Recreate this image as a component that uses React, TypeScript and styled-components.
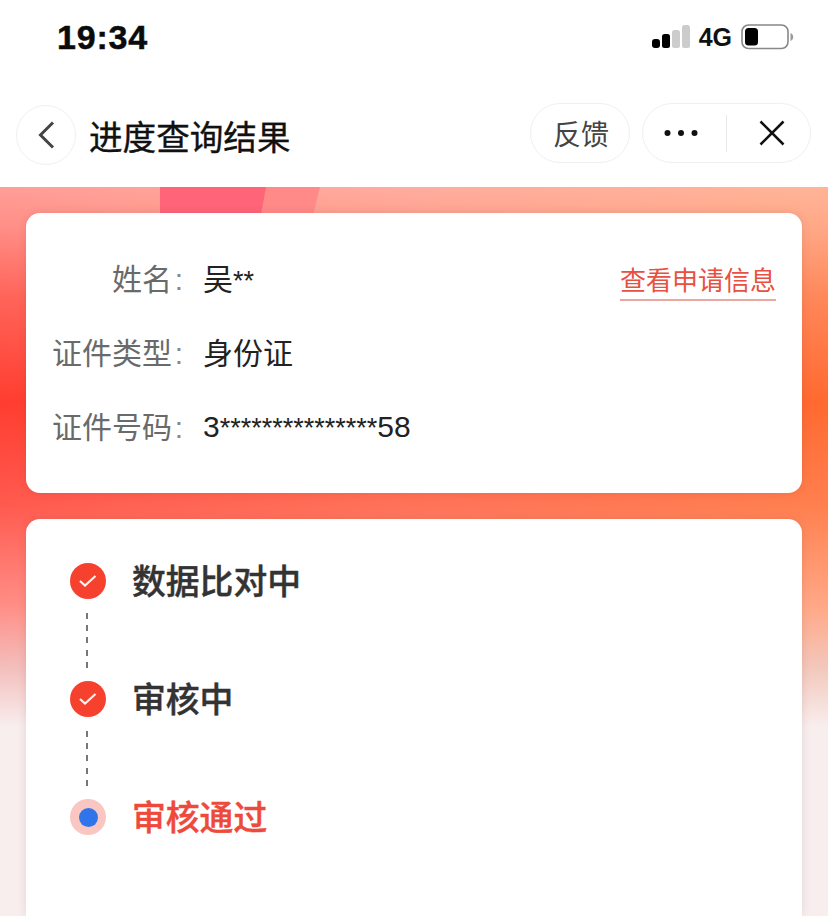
import styled, { createGlobalStyle } from "styled-components";

const GlobalStyle = createGlobalStyle`
  html, body {
    margin: 0;
    padding: 0;
    background: #fff;
  }
  * {
    box-sizing: border-box;
  }
`;

const CJK = `"Liberation Sans", "Noto Sans CJK SC", sans-serif`;

const Page = styled.div`
  display: flex;
  flex-direction: column;
  width: 828px;
  height: 916px;
  overflow: hidden;
  font-family: ${CJK};
`;

const StatusBar = styled.div`
  display: flex;
  justify-content: space-between;
  align-items: center;
  height: 74px;
  padding: 0 34px 0 57px;
`;

const Clock = styled.span`
  font-size: 34px;
  font-weight: 700;
  letter-spacing: 0.8px;
  color: #0b0b0b;
  -webkit-text-stroke: 0.5px #0b0b0b;
`;

const StatusIcons = styled.div`
  display: flex;
  align-items: center;
  gap: 9px;
`;

const Network = styled.span`
  font-size: 25px;
  font-weight: 700;
  color: #111;
`;

const NavBar = styled.div`
  display: flex;
  align-items: center;
  height: 113px;
  padding: 5px 17px 0 16px;
`;

const BackButton = styled.div`
  display: flex;
  align-items: center;
  justify-content: center;
  width: 60px;
  height: 60px;
  margin-top: 4px;
  border: 1px solid #f0f0f0;
  border-radius: 50%;
`;

const Title = styled.h1`
  flex: 1;
  margin: 4px 0 0 13px;
  font-size: 33.6px;
  font-weight: 400;
  color: #111;
  -webkit-text-stroke: 0.35px #111;
`;

const Feedback = styled.div`
  display: flex;
  align-items: center;
  justify-content: center;
  width: 100px;
  height: 60px;
  margin-right: 12px;
  padding-left: 2px;
  border: 1px solid #f0f0f0;
  border-radius: 30px;
  font-size: 28px;
  color: #444;
`;

const Capsule = styled.div`
  display: flex;
  align-items: center;
  width: 169px;
  height: 60px;
  border: 1px solid #f0f0f0;
  border-radius: 30px;
`;

const CapsuleSlot = styled.div`
  display: flex;
  flex: 1;
  align-items: center;
  justify-content: center;
  height: 37px;
  &:first-child {
    padding-right: 6px;
  }
  & + & {
    padding-left: 7px;
    border-left: 1px solid #e8e8e8;
  }
`;

const Body = styled.main`
  position: relative;
  display: flex;
  flex: 1;
  flex-direction: column;
  gap: 26px;
  min-height: 0;
  padding: 26px 26px 0;
  background:
    linear-gradient(
      180deg,
      rgba(255, 255, 255, 0.5) 0,
      rgba(255, 255, 255, 0.42) 40px,
      rgba(255, 255, 255, 0.2) 110px,
      rgba(255, 255, 255, 0) 215px,
      rgba(255, 255, 255, 0.15) 318px,
      rgba(255, 255, 255, 0.42) 420px,
      rgba(240, 222, 222, 0.8) 480px,
      rgba(248, 238, 238, 1) 540px,
      #f8eeee 100%
    ),
    linear-gradient(90deg, #ff3d30 0, #ff5a3c 50%, #ff6a30 100%);
`;

const Ribbon = styled.div`
  position: absolute;
  top: 0;
  left: 160px;
  width: 160px;
  height: 26px;
  background: #ff8a88;
  clip-path: polygon(0 0, 100% 0, 96% 100%, 0 100%);
  &::before {
    content: "";
    display: block;
    width: 106px;
    height: 26px;
    background: #ff6478;
    clip-path: polygon(0 0, 100% 0, 95.5% 100%, 0 100%);
  }
`;

const Card = styled.section<{ $fill?: boolean }>`
  position: relative;
  flex: ${props => (props.$fill ? "1" : "none")};
  height: ${props => (props.$fill ? "auto" : "280px")};
  background: #fff;
  border-radius: ${props => (props.$fill ? "14px 14px 0 0" : "14px")};
  box-shadow: 0 0 8px rgba(110, 60, 60, 0.14);
`;

const InfoList = styled.dl`
  display: grid;
  grid-template-columns: 160px 1fr;
  grid-auto-rows: 74px;
  column-gap: 17px;
  align-items: center;
  margin: 0;
  padding: 27px 26px 0 0;
`;

const InfoLabel = styled.dt`
  font-size: 30px;
  color: #6a6a6a;
  text-align: right;
`;

const Colon = styled.span`
  display: inline-block;
  width: 14px;
  text-align: center;
  color: #888;
`;

const InfoValue = styled.dd`
  display: flex;
  justify-content: space-between;
  align-items: center;
  margin: 0;
  font-size: 30px;
  color: #222;
`;

const Masked = styled.span`
  font-size: 27px;
`;

const IdNumber = styled.span`
  padding-top: 3px;
`;

const InfoLink = styled.a`
  padding-bottom: 2px;
  border-bottom: 2px solid #e8a8a0;
  font-size: 26px;
  color: #e8503f;
  transform: translateY(3px);
`;

const Timeline = styled.div`
  display: flex;
  flex-direction: column;
  padding: 44px 0 0 44px;
`;

const Step = styled.div`
  display: flex;
  align-items: center;
  gap: 26px;
  height: 36px;
`;

const StepMark = styled.span`
  display: flex;
  flex: none;
  align-items: center;
  justify-content: center;
  width: 36px;
  height: 36px;
  border-radius: 50%;
  background: #f6412f;
`;

const CurrentMark = styled(StepMark)`
  background: #f9c6c2;
`;

const CurrentDot = styled.span`
  width: 19px;
  height: 19px;
  border-radius: 50%;
  background: #2f74ea;
`;

const StepText = styled.span<{ $active?: boolean }>`
  margin-top: -4px;
  font-size: 33.8px;
  font-weight: 500;
  color: ${props => (props.$active ? "#ee4a3c" : "#333")};
  -webkit-text-stroke: 0.45px ${props => (props.$active ? "#ee4a3c" : "#333")};
`;

const Connector = styled.div`
  width: 2px;
  height: 55px;
  margin: 14px 0 13px 16px;
  background: repeating-linear-gradient(180deg, #777 0, #777 6px, transparent 6px, transparent 12.25px);
`;

const SignalIcon = () => (
  <svg width="38" height="24" viewBox="0 0 38 24">
    <rect x="0" y="14" width="8" height="9" rx="3" fill="#000" />
    <rect x="10" y="9" width="8" height="14" rx="2.5" fill="#000" />
    <rect x="20" y="5" width="8" height="18" rx="2.5" fill="#ccc" />
    <rect x="30" y="0" width="8" height="23" rx="2.5" fill="#ccc" />
  </svg>
);

const BatteryIcon = () => (
  <svg width="53" height="26" viewBox="0 0 53 26">
    <rect x="1" y="1" width="46" height="23.5" rx="6.5" fill="none" stroke="#888" strokeWidth="1.6" />
    <rect x="4" y="4" width="13" height="17.5" rx="3.5" fill="#000" />
    <path d="M49.5 9 C51.5 10 52.2 11.5 52.2 13 C52.2 14.5 51.5 16 49.5 17 Z" fill="#999" />
  </svg>
);

const BackIcon = () => (
  <svg width="20" height="32" viewBox="0 0 20 32">
    <path d="M17 3.5 L4.5 16 L17 28.5" fill="none" stroke="#444" strokeWidth="3" />
  </svg>
);

const MoreIcon = () => (
  <svg width="34" height="8" viewBox="0 0 34 8">
    <circle cx="3.5" cy="4" r="3" fill="#111" />
    <circle cx="17" cy="4" r="3" fill="#111" />
    <circle cx="30.5" cy="4" r="3" fill="#111" />
  </svg>
);

const CloseIcon = () => (
  <svg width="26" height="26" viewBox="0 0 26 26">
    <path d="M1.5 1.5 L24.5 24.5 M24.5 1.5 L1.5 24.5" fill="none" stroke="#111" strokeWidth="2.6" />
  </svg>
);

const CheckIcon = () => (
  <svg width="20" height="16" viewBox="0 0 20 16">
    <path d="M2 8 L7 12.5 L17.5 3" fill="none" stroke="#fff5f2" strokeWidth="2.2" />
  </svg>
);

export default function App() {
  return (
    <Page>
      <GlobalStyle />
      <StatusBar>
        <Clock>19:34</Clock>
        <StatusIcons>
          <SignalIcon />
          <Network>4G</Network>
          <BatteryIcon />
        </StatusIcons>
      </StatusBar>
      <NavBar>
        <BackButton>
          <BackIcon />
        </BackButton>
        <Title>进度查询结果</Title>
        <Feedback>反馈</Feedback>
        <Capsule>
          <CapsuleSlot>
            <MoreIcon />
          </CapsuleSlot>
          <CapsuleSlot>
            <CloseIcon />
          </CapsuleSlot>
        </Capsule>
      </NavBar>
      <Body>
        <Ribbon />
        <Card>
          <InfoList>
            <InfoLabel>姓名<Colon>:</Colon></InfoLabel>
            <InfoValue>
              <span>吴<Masked>**</Masked></span>
              <InfoLink>查看申请信息</InfoLink>
            </InfoValue>
            <InfoLabel>证件类型<Colon>:</Colon></InfoLabel>
            <InfoValue>身份证</InfoValue>
            <InfoLabel>证件号码<Colon>:</Colon></InfoLabel>
            <InfoValue>
              <IdNumber>3<Masked>***************</Masked>58</IdNumber>
            </InfoValue>
          </InfoList>
        </Card>
        <Card $fill>
          <Timeline>
            <Step>
              <StepMark>
                <CheckIcon />
              </StepMark>
              <StepText>数据比对中</StepText>
            </Step>
            <Connector />
            <Step>
              <StepMark>
                <CheckIcon />
              </StepMark>
              <StepText>审核中</StepText>
            </Step>
            <Connector />
            <Step>
              <CurrentMark>
                <CurrentDot />
              </CurrentMark>
              <StepText $active>审核通过</StepText>
            </Step>
          </Timeline>
        </Card>
      </Body>
    </Page>
  );
}
